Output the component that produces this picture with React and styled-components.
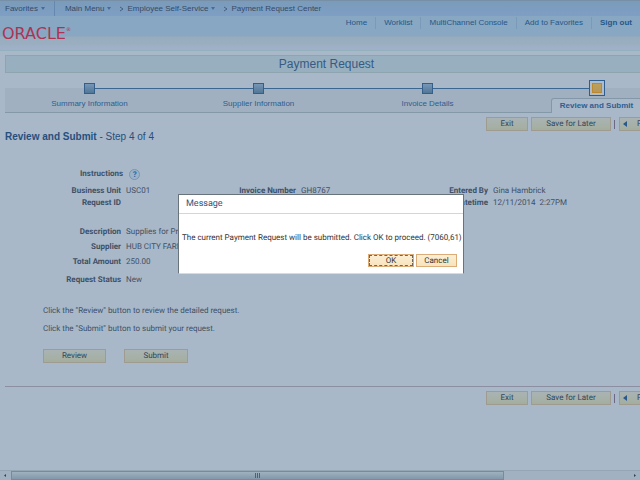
import React from 'react';
import styled, { createGlobalStyle } from 'styled-components';

const GlobalStyle = createGlobalStyle`
  * {
    box-sizing: border-box;
  }

  body {
    margin: 0;
    background: #a8b8c9;
    color: #405066;
    font-family: Roboto, "Liberation Sans", Arial, sans-serif;
    font-size: 8px;
    line-height: 12px;
    text-rendering: geometricPrecision;
  }

  button {
    font: inherit;
    text-rendering: inherit;
  }
`;

const Page = styled.div`
  display: flex;
  flex-direction: column;
  min-height: 100vh;
  overflow: hidden;
`;

const Header = styled.header`
  background: linear-gradient(#87a7c2 0 32px, #8ba6c2 36px, #97adbe 37px, #9aaec0 44px, #9fb0c8 48px);
  border-bottom: 1px solid #92b1bd;
  font-family: "Liberation Sans", Arial, sans-serif;
  text-rendering: auto;
`;

const Breadcrumbs = styled.nav`
  display: flex;
  align-items: center;
  height: 16px;
  padding-left: 5px;
  background: linear-gradient(#7b9bbb, #7e9fc3);
  border-top: 1px solid #7790a8;
`;

const Crumb = styled.a`
  display: flex;
  align-items: center;
  gap: 2px;
  color: #344b68;
  text-decoration: none;
`;

const FavoritesCrumb = styled(Crumb)`
  height: 15px;
  margin-right: 10px;
  padding-right: 8px;
  border-right: 1px solid #6588ae;
`;

const Chevron = styled.svg`
  width: 5px;
  height: 8px;
  margin: 0 3px 0 7px;
`;

const Brand = styled.div`
  display: flex;
  justify-content: space-between;
  height: 34px;
`;

const Logo = styled.a`
  display: flex;
  padding: 9px 0 0 2px;
  color: #ae3353;
  font-family: "DejaVu Sans", sans-serif;
  font-size: 16px;
  line-height: 18px;
  text-decoration: none;

  sup {
    font-size: 5px;
    line-height: 8px;
  }
`;

const UserLinks = styled.nav`
  display: flex;
  height: 12px;
  margin-top: 1px;
`;

const UserLink = styled.a`
  padding: 0 8px;
  color: #265788;
  font-weight: ${(props) => (props.$strong ? 'bold' : 'normal')};
  text-decoration: none;

  & + & {
    border-left: 1px solid #7b9ab9;
  }
`;

const Main = styled.main`
  flex: 1;
  padding: 4px 0 0 5px;
`;

const Title = styled.h1`
  margin: 0 -8px 7px 0;
  background: #98afbf;
  border: 1px solid #8ea5b0;
  color: #375b83;
  font-family: "Liberation Sans", Arial, sans-serif;
  font-size: 12px;
  font-weight: normal;
  line-height: 16px;
  text-align: center;
  text-rendering: auto;
`;

// the train runs past the right edge of the window
const Train = styled.ol`
  display: grid;
  grid-template-columns: repeat(4, 1fr);
  margin: 0 -41px 0 0;
  padding: 0;
  list-style: none;
  background: linear-gradient(transparent 8px, #a0b0c0 8px);
  border-bottom: 1px solid #8499a7;
  font-family: "Liberation Sans", Arial, sans-serif;
  text-rendering: auto;
`;

const Step = styled.li`
  display: flex;
  flex-direction: column;
  align-items: center;
`;

const Rail = styled.div`
  display: grid;
  grid-template-columns: 1fr auto 1fr;
  align-items: center;
  width: 100%;
  height: 16px;
`;

const Line = styled.span`
  height: 1px;
  background: ${(props) => (props.$hidden ? 'transparent' : '#396792')};
`;

const Node = styled.span`
  width: 11px;
  height: 11px;
  background: linear-gradient(#7796b5, #507799);
  border: 1px solid #355f89;
`;

const ActiveNode = styled(Node)`
  width: 16px;
  height: 16px;
  background: linear-gradient(#bfa25f, #b29656);
  border: 1px solid #2f5d8d;
  box-shadow: inset 0 0 0 2px #afbdca, inset 0 0 0 3px #bb872f;
`;

const StepLink = styled.a`
  margin-top: 2px;
  color: #2f5e91;
  text-decoration: none;
`;

const ActiveStepLink = styled(StepLink)`
  margin-bottom: -1px;
  padding: 1px 8px;
  background: #a8b8c9;
  border: 1px solid #8298a8;
  border-bottom: 0;
  border-radius: 3px 3px 0 0;
  font-weight: bold;
`;

const Toolbar = styled.div`
  display: flex;
  justify-content: flex-end;
  gap: 3px;
  margin: 4px -40px 0 0;
`;

const Separator = styled.span`
  height: 9px;
  margin: 3px 1px 0 0;
  border-left: 1px solid #6d6884;
`;

const ActionButton = styled.button`
  display: flex;
  align-items: center;
  justify-content: center;
  width: ${(props) => props.$width};
  height: 14px;
  padding: 0;
  background: linear-gradient(#aab3b4, #a4ae9e);
  border: 1px solid #a09b91;
  color: #34465c;
  line-height: 12px;
`;

const PreviousButton = styled(ActionButton)`
  justify-content: flex-start;
  gap: 10px;
  padding-left: 3px;
`;

const Heading = styled.h2`
  margin: -1px 0 24px;
  color: #274f7c;
  font-family: "Liberation Sans", Arial, sans-serif;
  font-size: 10px;
  line-height: 14px;
  text-rendering: auto;

  span {
    font-weight: normal;
  }
`;

const Fields = styled.dl`
  display: grid;
  grid-template-columns: 116px 105px 60px 122px 60px 1fr;
  column-gap: 5px;
  margin: 0;
`;

const Label = styled.dt`
  grid-column: ${(props) => props.$column || 1};
  font-weight: bold;
  text-align: right;
  white-space: nowrap;
`;

const Value = styled.dd`
  margin: 0;
  white-space: nowrap;
`;

const Instructions = styled.div`
  display: flex;
  align-items: center;
  gap: 6px;
  padding-left: 75px;
  margin-bottom: 5px;
  font-weight: bold;
`;

const HelpButton = styled.button`
  width: 11px;
  height: 11px;
  padding: 0;
  background: #9bb3c9;
  border: 1px solid #7795b2;
  border-radius: 50%;
  color: #2f6799;
  font-size: 8px;
  font-weight: bold;
  line-height: 9px;
`;

const Details = styled(Fields)`
  row-gap: 3px;
  margin-top: 17px;
`;

const Status = styled(Fields)`
  margin-top: 6px;
`;

const Notes = styled.div`
  padding-left: 38px;
  margin-top: 19px;

  p {
    margin: 0 0 6px;
  }
`;

const NoteActions = styled.div`
  display: flex;
  gap: 18px;
  margin-top: 14px;
`;

const Footer = styled.footer`
  margin-top: 23px;
  border-top: 1px solid #8c8fa0;
`;

const Scrollbar = styled.div`
  display: flex;
  align-items: center;
  height: 10px;
  background: #a1b1c1;
  border-top: 1px solid #94a5b4;
`;

const Thumb = styled.div`
  display: flex;
  align-items: center;
  justify-content: center;
  width: 77%;
  height: 9px;
  background: linear-gradient(#9eb1bf, #8398ab);
  border: 1px solid #788b9e;
`;

const ScrollTrack = styled.div`
  flex: 1;
`;

const Arrow = styled.svg`
  width: 11px;
  height: 7px;
`;

const Overlay = styled.div`
  position: fixed;
  inset: 0;
  display: grid;
  place-items: center;
  padding: 0 0 12px 2px;
`;

const Dialog = styled.section`
  width: 286px;
  background: #fff;
  border: 1px solid #69737b;
  border-bottom-color: #d5dbe0;
  color: #333;
`;

const DialogTitle = styled.h2`
  margin: 0;
  padding: 1px 7px 0;
  border-bottom: 1px solid #cbd9dc;
  color: #2b5580;
  font-size: 9px;
  font-weight: normal;
  line-height: 17px;
`;

const DialogText = styled.p`
  margin: 18px 3px 10px;
  white-space: nowrap;
`;

const DialogActions = styled.div`
  display: flex;
  justify-content: flex-end;
  gap: 2px;
  padding: 0 6px 6px;
`;

const DialogButton = styled.button`
  width: ${(props) => props.$width};
  height: 13px;
  padding: 0;
  background: linear-gradient(#fcefd6, #f8e3bb);
  border: 1px solid #dbac78;
  color: #333;
  line-height: 11px;
`;

const OkButton = styled(DialogButton)`
  outline: 1px dashed #6b6660;
  outline-offset: -2px;
`;

const DownArrow = () => (
  <svg width="6" height="4" viewBox="0 0 6 4" aria-hidden="true">
    <path d="M1 0h4L3 3z" fill="#456d99" />
  </svg>
);

const CrumbChevron = () => (
  <Chevron viewBox="0 0 5 8" aria-hidden="true">
    <path d="M1 2l3 2-3 2" fill="none" stroke="#46617f" />
  </Chevron>
);

const steps = ['Summary Information', 'Supplier Information', 'Invoice Details'];

const PageActions = () => (
  <Toolbar>
    <ActionButton $width="42px">Exit</ActionButton>
    <ActionButton $width="80px">Save for Later</ActionButton>
    <Separator />
    <PreviousButton $width="61px">
      <svg width="4" height="6" viewBox="0 0 4 6" aria-hidden="true">
        <path d="M4 0v6L0 3z" fill="#28588c" />
      </svg>
      Previous
    </PreviousButton>
  </Toolbar>
);

const App = () => (
  <>
    <GlobalStyle />
    <Page>
      <Header>
        <Breadcrumbs aria-label="Breadcrumb">
          <FavoritesCrumb href="#favorites">
            Favorites
            <DownArrow />
          </FavoritesCrumb>
          <Crumb href="#menu">
            Main Menu
            <DownArrow />
          </Crumb>
          <CrumbChevron />
          <Crumb href="#self-service">
            Employee Self-Service
            <DownArrow />
          </Crumb>
          <CrumbChevron />
          <Crumb href="#payments">Payment Request Center</Crumb>
        </Breadcrumbs>
        <Brand>
          <Logo href="#home">
            ORACLE<sup>®</sup>
          </Logo>
          <UserLinks>
            <UserLink href="#home">Home</UserLink>
            <UserLink href="#worklist">Worklist</UserLink>
            <UserLink href="#console">MultiChannel Console</UserLink>
            <UserLink href="#add">Add to Favorites</UserLink>
            <UserLink href="#signout" $strong>
              Sign out
            </UserLink>
          </UserLinks>
        </Brand>
      </Header>

      <Main>
        <Title>Payment Request</Title>
        <Train>
          {steps.map((step, index) => (
            <Step key={step}>
              <Rail>
                <Line $hidden={index === 0} />
                <Node />
                <Line />
              </Rail>
              <StepLink href="#step">{step}</StepLink>
            </Step>
          ))}
          <Step>
            <Rail>
              <Line />
              <ActiveNode />
              <Line $hidden />
            </Rail>
            <ActiveStepLink href="#step" aria-current="step">
              Review and Submit
            </ActiveStepLink>
          </Step>
        </Train>

        <PageActions />
        <Heading>
          Review and Submit <span>- Step 4 of 4</span>
        </Heading>

        <Instructions>
          Instructions
          <HelpButton aria-label="Help">?</HelpButton>
        </Instructions>
        <Fields>
          <Label>Business Unit</Label>
          <Value>USC01</Value>
          <Label $column={3}>Invoice Number</Label>
          <Value>GH8767</Value>
          <Label $column={5}>Entered By</Label>
          <Value>Gina Hambrick</Value>
          <Label>Request ID</Label>
          <Value />
          <Label $column={5}>Datetime</Label>
          <Value>12/11/2014&nbsp; 2:27PM</Value>
        </Fields>
        <Details>
          <Label>Description</Label>
          <Value>Supplies for Program</Value>
          <Label>Supplier</Label>
          <Value>HUB CITY FARMERS</Value>
          <Label>Total Amount</Label>
          <Value>250.00</Value>
        </Details>
        <Status>
          <Label>Request Status</Label>
          <Value>New</Value>
        </Status>

        <Notes>
          <p>Click the "Review" button to review the detailed request.</p>
          <p>Click the "Submit" button to submit your request.</p>
          <NoteActions>
            <ActionButton $width="63px">Review</ActionButton>
            <ActionButton $width="64px">Submit</ActionButton>
          </NoteActions>
        </Notes>

        <Footer>
          <PageActions />
        </Footer>
      </Main>

      <Scrollbar>
        <Arrow viewBox="0 0 11 7" aria-hidden="true">
          <path d="M6 2v3L4 3.500z" fill="#2f4356" />
        </Arrow>
        <Thumb>
          <svg width="7" height="5" viewBox="0 0 7 5" aria-hidden="true">
            <path d="M1.500 0v5M3.500 0v5M5.500 0v5" stroke="#4e6275" />
          </svg>
        </Thumb>
        <ScrollTrack />
        <Arrow viewBox="0 0 11 7" aria-hidden="true">
          <path d="M5 2v3l2-1.500z" fill="#2f4356" />
        </Arrow>
      </Scrollbar>
    </Page>

    <Overlay>
      <Dialog role="dialog" aria-modal="true" aria-labelledby="message-title">
        <DialogTitle id="message-title">Message</DialogTitle>
        <DialogText>The current Payment Request will be submitted. Click OK to proceed. (7060,61)</DialogText>
        <DialogActions>
          <OkButton $width="46px">OK</OkButton>
          <DialogButton $width="41px">Cancel</DialogButton>
        </DialogActions>
      </Dialog>
    </Overlay>
  </>
);

export default App;
